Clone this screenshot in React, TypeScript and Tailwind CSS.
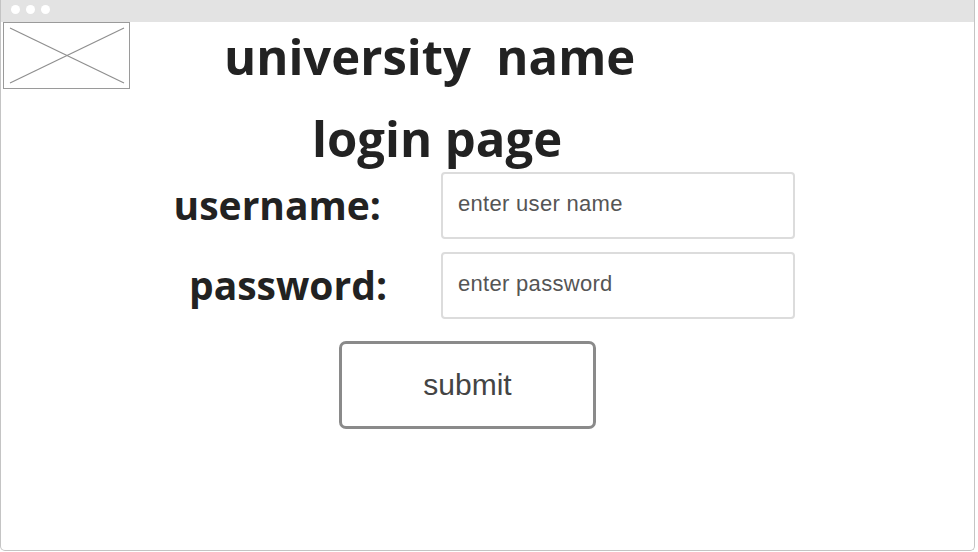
import React from 'react';

// wireframe style login mockup
const ImagePlaceholder: React.FC = () => (
    <div className="w-[127px] h-[67px] border border-[#9a9a9a] bg-white">
        <svg width="125" height="65" viewBox="0 0 125 65">
            <line x1="6" y1="5" x2="120" y2="60" stroke="#8f8f8f" strokeWidth="1.2" />
            <line x1="6" y1="60" x2="120" y2="5" stroke="#8f8f8f" strokeWidth="1.2" />
        </svg>
    </div>
);

export default function App() {
    return (
        <div className="w-[978px] h-[552px] bg-white font-['Open_Sans',sans-serif]">
            <div className="w-[975px] h-[551px] border border-[#c4c4c4] border-t-0 rounded-b-[5px] overflow-hidden flex flex-col">
                {/* browser top bar */}
                <div className="h-[22px] bg-[#e3e3e3] flex items-center gap-[6px] pl-[10px] pb-[3px] shrink-0">
                    <span className="w-[9px] h-[9px] rounded-full bg-white" />
                    <span className="w-[9px] h-[9px] rounded-full bg-white" />
                    <span className="w-[9px] h-[9px] rounded-full bg-white" />
                </div>

                <div className="flex items-start pl-[2px]">
                    <ImagePlaceholder />
                    <h1 className="ml-[94px] mt-[6px] text-[49px] leading-[56px] font-bold text-[#222] whitespace-pre">
                        university  name
                    </h1>
                </div>

                <h2 className="ml-[311px] mt-[21px] text-[49px] leading-[56px] font-bold text-[#222]">
                    login page
                </h2>

                <div className="flex items-center mt-[6px]">
                    <label className="w-[440px] pr-[60px] text-right text-[39px] font-bold text-[#222]">
                        username:
                    </label>
                    <div className="w-[354px] h-[67px] border-2 border-[#dcdcdc] rounded-[4px] flex items-center pl-[15px] pb-[4px] font-['Liberation_Sans',Arial,sans-serif] text-[22px] tracking-[0.3px] text-[#555]">
                        enter user name
                    </div>
                </div>

                <div className="flex items-center mt-[13px]">
                    <label className="w-[440px] pr-[54px] text-right text-[39px] font-bold text-[#222]">
                        password:
                    </label>
                    <div className="w-[354px] h-[67px] border-2 border-[#dcdcdc] rounded-[4px] flex items-center pl-[15px] pb-[4px] font-['Liberation_Sans',Arial,sans-serif] text-[22px] tracking-[0.3px] text-[#555]">
                        enter password
                    </div>
                </div>

                <button className="ml-[338px] mt-[22px] w-[257px] h-[88px] border-[3px] border-[#8a8a8a] rounded-[7px] bg-white font-['Liberation_Sans',Arial,sans-serif] text-[30px] text-[#444] flex items-center justify-center pb-[2px]">
                    submit
                </button>
            </div>
        </div>
    );
}
